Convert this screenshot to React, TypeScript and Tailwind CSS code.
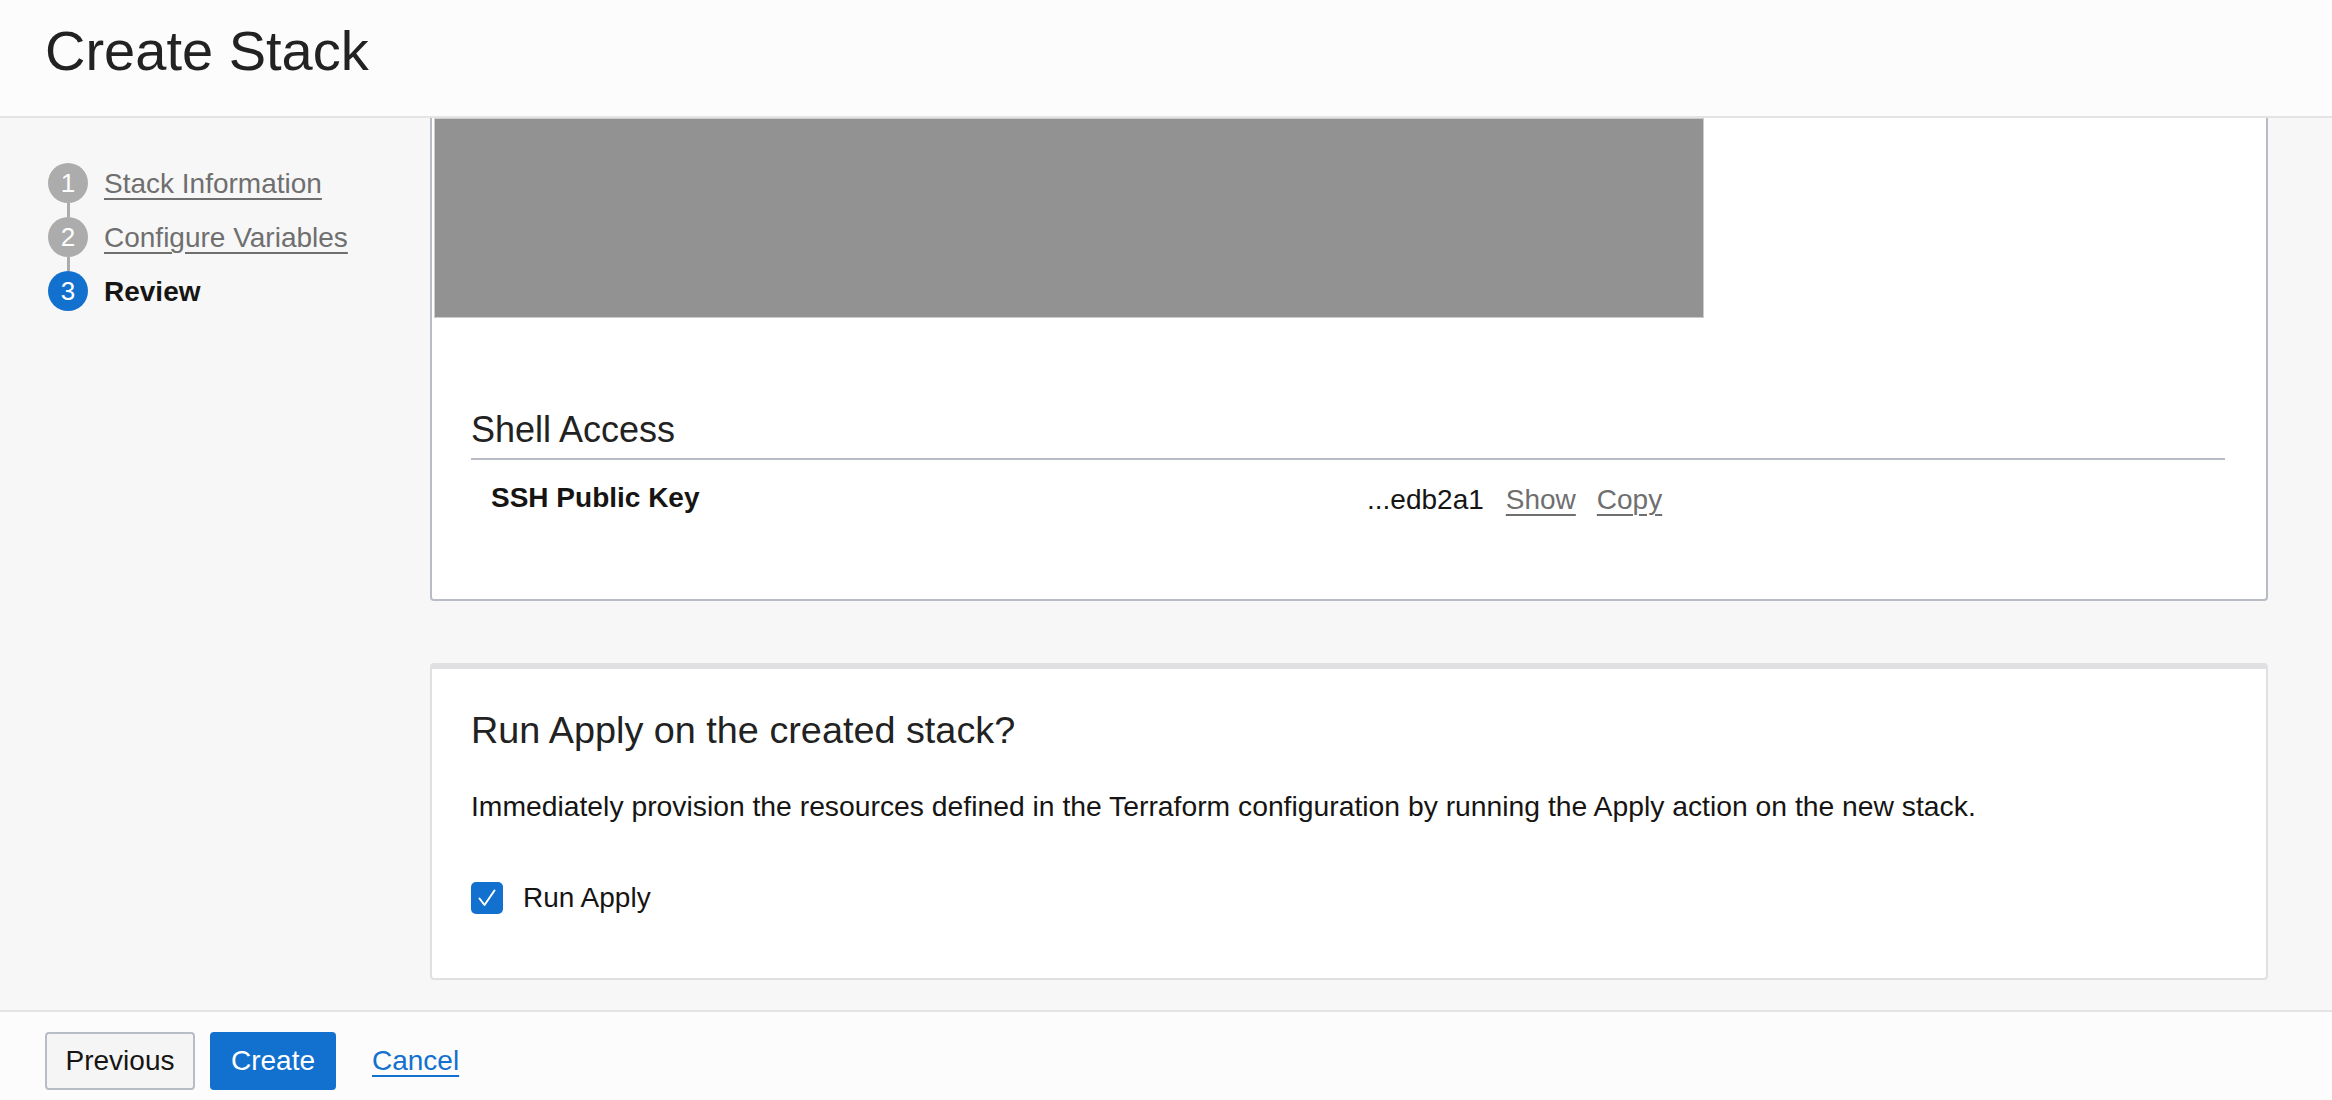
import React from "react";

const font = { fontFamily: '"Liberation Sans", Arial, Helvetica, sans-serif' };

function Step({ n, label, active }: { n: number; label: string; active?: boolean }) {
  return (
    <div className="flex items-center h-[40px]">
      <div
        className={
          "w-[40px] h-[40px] rounded-full flex items-center justify-center text-white text-[26px] leading-none " +
          (active ? "bg-[#1271ce]" : "bg-[#acacac]")
        }
      >
        {n}
      </div>
      {active ? (
        <span className="ml-[16px] mt-[2px] text-[28px] font-bold text-[#161513]">{label}</span>
      ) : (
        <span className="ml-[16px] mt-[2px] text-[28px] text-[#6f6f6f] underline decoration-[2px] underline-offset-[5px]">
          {label}
        </span>
      )}
    </div>
  );
}

function Connector() {
  return (
    <div className="h-[14px] w-[40px] flex justify-center">
      <div className="w-[3px] h-full bg-[#acacac]" />
    </div>
  );
}

export default function App() {
  return (
    <div style={font} className="w-full h-[1100px] flex flex-col text-[#161513] overflow-hidden">
      <header className="h-[118px] shrink-0 bg-[#fcfcfc] border-b-2 border-[#e4e4e4] pl-[45px] pt-[23px]">
        <h1 className="text-[56px] leading-[56px] font-normal text-[#222]">Create Stack</h1>
      </header>

      <div className="flex-1 flex bg-[#f7f7f7] min-h-0">
        <aside className="w-[430px] shrink-0 pl-[48px] pt-[45px]">
          <Step n={1} label="Stack Information" />
          <Connector />
          <Step n={2} label="Configure Variables" />
          <Connector />
          <Step n={3} label="Review" active />
        </aside>

        <main className="flex-1 pr-[64px] flex flex-col">
          <section className="h-[483px] shrink-0 bg-white border-x-2 border-b-2 border-[#b8bcc4] rounded-b-[4px] flex flex-col">
            <div className="ml-[2px] w-[1270px] h-[200px] bg-[#929292] border border-[#cccccc]" />
            <div className="pl-[39px] pr-[41px] pt-[90px]">
              <h2 className="text-[36px] leading-[44px] font-normal text-[#222] pb-[6px] border-b-2 border-[#b8bcc4]">
                Shell Access
              </h2>
              <div className="flex items-center h-[40px] mt-[18px] pl-[20px] text-[28px]">
                <div className="w-[876px] font-bold">SSH Public Key</div>
                <div className="flex items-center mt-[3px]">
                  <span>...edb2a1</span>
                  <span className="ml-[22px] text-[#6f6f6f] underline decoration-[2px] underline-offset-[5px]">Show</span>
                  <span className="ml-[21px] text-[#6f6f6f] underline decoration-[2px] underline-offset-[5px]">Copy</span>
                </div>
              </div>
            </div>
          </section>

          <section className="mt-[62px] h-[317px] shrink-0 bg-white border-2 border-t-[6px] border-[#e0e0e3] rounded-[4px] px-[39px] pt-[39px]">
            <h2 className="text-[37.8px] leading-[44px] font-normal text-[#222]">Run Apply on the created stack?</h2>
            <p className="mt-[34px] text-[28.3px] leading-[40px]">
              Immediately provision the resources defined in the Terraform configuration by running the Apply action on the new stack.
            </p>
            <label className="mt-[56px] flex items-center h-[32px]">
              <span className="w-[32px] h-[32px] rounded-[5px] bg-[#1271ce] flex items-center justify-center">
                <svg width="22" height="22" viewBox="0 0 22 22" fill="none">
                  <path d="M3.5 11.5 L8.5 18 L18.5 3.5" stroke="white" strokeWidth="2" strokeLinecap="round" strokeLinejoin="round" />
                </svg>
              </span>
              <span className="ml-[20px] text-[28px]">Run Apply</span>
            </label>
          </section>
        </main>
      </div>

      <footer className="h-[90px] shrink-0 bg-[#fcfcfc] border-t-2 border-[#e4e4e4] flex items-start pt-[20px] pl-[45px]">
        <button className="h-[58px] w-[150px] rounded-[4px] border-2 border-[#b8bcc4] bg-[#f5f5f5] text-[28px] text-[#161513]">
          Previous
        </button>
        <button className="ml-[15px] h-[58px] w-[126px] rounded-[4px] bg-[#1271ce] text-[28px] text-white">
          Create
        </button>
        <span className="ml-[36px] h-[58px] flex items-center text-[28px] text-[#1271ce] underline decoration-[2px] underline-offset-[5px]">
          Cancel
        </span>
      </footer>
    </div>
  );
}
